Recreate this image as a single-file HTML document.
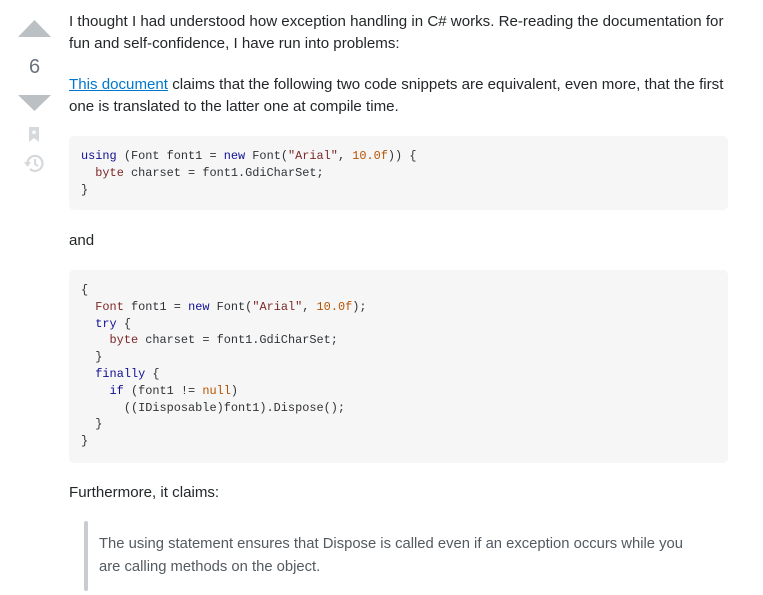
<!DOCTYPE html>
<html><head><meta charset="utf-8"><style>
body{margin:0;background:#fff;width:763px;height:595px;overflow:hidden;position:relative;font-family:"Liberation Sans",sans-serif;color:#242729}
.t{position:absolute;left:69px;font-size:15.1px;white-space:nowrap;line-height:22px}
a{color:#0077cc;text-decoration:underline}
.code{position:absolute;left:69px;width:659px;background:#f6f6f6;border-radius:5px}
pre{margin:0;position:absolute;left:12px;font-family:"Liberation Mono",monospace;font-size:11.9px;line-height:16.8px;color:#303336}
.k{color:#101094}.ty{color:#7d2727}.s{color:#7d2727}.n{color:#b75301}
.bq{position:absolute;left:99px;font-size:14.8px;line-height:23px;color:#535a60;white-space:nowrap}
</style></head><body>
<svg style="position:absolute;left:0;top:0" width="68" height="180">
<polygon points="18,37 51,37 34.5,20" fill="#bbc0c4"/>
<text x="34.5" y="73" text-anchor="middle" font-family="Liberation Sans" font-size="20" fill="#6a737c">6</text>
<polygon points="18,95 51,95 34.5,111" fill="#bbc0c4"/>
<path d="M29,127 h10 v15 l-5,-4 l-5,4 z" fill="#d6d9dc"/>
<path d="M34,129.5 l0.8,1.8 1.8,0.2 -1.4,1.2 0.4,1.8 -1.6,-1 -1.6,1 0.4,-1.8 -1.4,-1.2 1.8,-0.2z" fill="#fff"/>
<path d="M27.5,163 A7.5,7.5 0 1 1 30,169" fill="none" stroke="#d6d9dc" stroke-width="2.2"/>
<polygon points="24,162 31,162 27.5,167" fill="#d6d9dc"/>
<path d="M35,159 v5 l3,2" fill="none" stroke="#d6d9dc" stroke-width="2"/>
</svg>
<div class="t" style="top:11px">I thought I had understood how exception handling in C# works. Re-reading the documentation for</div>
<div class="t" style="top:33px">fun and self-confidence, I have run into problems:</div>
<div class="t" style="top:74px"><a>This document</a> claims that the following two code snippets are equivalent, even more, that the first</div>
<div class="t" style="top:96px">one is translated to the latter one at compile time.</div>
<div class="code" style="top:136px;height:74px"><pre style="top:12px"><span class="k">using</span> (Font font1 = <span class="k">new</span> Font(<span class="s">"Arial"</span>, <span class="n">10.0f</span>)) {
  <span class="ty">byte</span> charset = font1.GdiCharSet;
}</pre></div>
<div class="t" style="top:230px">and</div>
<div class="code" style="top:270px;height:193px"><pre style="top:12px">{
  <span class="ty">Font</span> font1 = <span class="k">new</span> Font(<span class="s">"Arial"</span>, <span class="n">10.0f</span>);
  <span class="k">try</span> {
    <span class="ty">byte</span> charset = font1.GdiCharSet;
  }
  <span class="k">finally</span> {
    <span class="k">if</span> (font1 != <span class="n">null</span>)
      ((IDisposable)font1).Dispose();
  }
}</pre></div>
<div class="t" style="top:482px">Furthermore, it claims:</div>
<div style="position:absolute;left:84px;top:521px;width:4px;height:70px;background:#c8ccd0;border-radius:2px"></div>
<div class="bq" style="top:533px">The using statement ensures that Dispose is called even if an exception occurs while you</div>
<div class="bq" style="top:556px">are calling methods on the object.</div>
</body></html>
